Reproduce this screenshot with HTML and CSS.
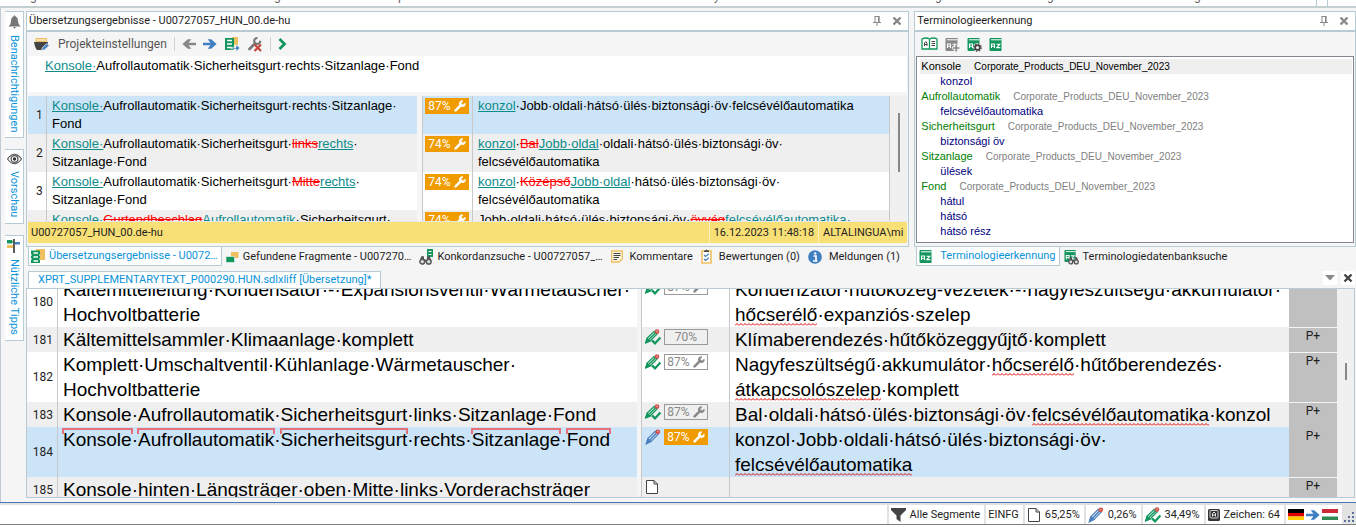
FILE: index.html
```html
<!DOCTYPE html>
<html lang="de">
<head>
  <meta charset="UTF-8">
  <meta name="viewport" content="width=device-width, initial-scale=1.0">
  <title>Editor</title>
  <link rel="stylesheet" href="styles.css">
</head>
<body>
  <!-- Icons -->
  <svg class="sprite" aria-hidden="true">
    <symbol id="wrench" viewBox="0 0 12 12">
      <path d="M1.6 10.4 L6.6 5.4" stroke="currentColor" stroke-width="2.6" stroke-linecap="round"/>
      <path d="M8.8 1.2 A2.4 2.4 0 1 0 10.8 3.4" stroke="currentColor" stroke-width="2" fill="none"/>
      <path d="M5.8 4.4 L7.2 3 L9 4.8 L7.6 6.2Z" fill="currentColor"/>
    </symbol>
    <symbol id="close" viewBox="0 0 10 10">
      <path d="M1.5 1.5 L8.5 8.5 M8.5 1.5 L1.5 8.5" stroke="currentColor" stroke-width="2.4"/>
    </symbol>
    <symbol id="pin" viewBox="0 0 10 10">
      <path d="M2.5 .5 H7.5 M3 .5 V6 M6.5 .5 V6 M7.2 .5 V6 M1 6.5 H9 M5 6.5 V10" stroke="currentColor" fill="none"/>
    </symbol>
    <symbol id="pencil" viewBox="0 0 16 16">
      <path d="M1.5 14.5 L3 9.6 L10.2 2.4 L13 5.2 L6 12.6 Z" fill="#dce9f6" stroke="#4a80bd" stroke-width="1.2"/>
      <path d="M4.4 11.4 L11.4 4 M1.5 14.5 L3 10 L5.6 12.4Z" stroke="#4a80bd" stroke-width="1.4" fill="#4a80bd"/>
      <circle cx="12.8" cy="2.8" r="2.4" fill="#d0504b"/>
      <circle cx="12.8" cy="2.6" r=".8" fill="#f0a8a4"/>
    </symbol>
    <symbol id="pencil-ok" viewBox="0 0 16 16">
      <path d="M.8 13.8 L2.2 9 L9.2 2.4 L12 5 L5 12 Z" fill="#d6efe2" stroke="#12965d" stroke-width="1.3"/>
      <path d="M3.4 10.8 L10.4 4 M.8 13.8 L2.2 9.6 L5 12Z" stroke="#12965d" stroke-width="1.2" fill="#12965d"/>
      <path d="M7 11.4 L10 14.4 L15.4 8.4" stroke="#12965d" stroke-width="2.2" fill="none"/>
      <circle cx="12" cy="2.6" r="2.3" fill="#d0504b"/>
      <circle cx="12" cy="2.4" r=".8" fill="#f0a8a4"/>
    </symbol>
    <symbol id="page" viewBox="0 0 14 16">
      <path d="M1.5 1.5 H9 L12.5 5 V14.5 H1.5Z M9 1.5 V5 H12.5" fill="#fff" stroke="#444"/>
    </symbol>
    <symbol id="arrow" viewBox="0 0 14 12">
      <path d="M0 4.7 H7.5 L4.6 1.2 H8.2 L13.6 6 L8.2 10.8 H4.6 L7.5 7.3 H0Z" fill="currentColor"/>
    </symbol>
    <symbol id="results" viewBox="0 0 14 14">
      <path d="M5 0 H14 V11 H5Z" fill="#f0c060"/>
      <path d="M0 1.500 H9 V14 H0Z" fill="#12965d"/>
      <path d="M2.500 4 H7 M2.500 8 H7 M2.500 12 H7" stroke="#fff" stroke-width="1.400"/>
      <path d="M0 6 H1 M0 10 H1 M8 6 H9 M8 10 H9" stroke="#fff"/>
    </symbol>
    <symbol id="glasses" viewBox="0 0 12 9">
      <path d="M2 1 H4.6 V4 H7.4 V1 H10 L11.5 6 H.5Z" fill="#555"/>
      <circle cx="3" cy="6" r="2.2" fill="#ddd" stroke="#555" stroke-width="1.3"/>
      <circle cx="9" cy="6" r="2.2" fill="#ddd" stroke="#555" stroke-width="1.3"/>
    </symbol>
    <symbol id="termbook" viewBox="0 0 14 15">
      <path d="M1.5 1 H12.5 V14 H1.5 Q.5 14 .5 13 V2 Q.5 1 1.5 1Z" fill="currentColor"/>
      <path d="M2 2.8 H12.5" stroke="#fff" stroke-width="1"/>
      <path d="M2.500 11 V7 H5.500 V11 M2.500 9.200 H5.500 M7.500 7.200 H10.800 L7.800 10.600 H11.300" stroke="#fff" stroke-width="1.100" fill="none"/>
    </symbol>
  </svg>

  <header class="ribbon">
    <span>g</span><span>g</span><span>p</span><span>y</span><span>g</span><span>g</span><span>g</span>
    <i class="ribbon-split"></i>
  </header>

  <div class="workspace">
    <nav class="rail">
      <button class="rail-tab">
        <svg width="13" height="14" viewBox="0 0 13 14"><path d="M6.5 0 L7.6 1.4 Q10 2.4 10 6 Q10 9.5 12.5 11.5 H.5 Q3 9.5 3 6 Q3 2.4 5.4 1.4Z M5 12 H8 L6.5 13.8Z" fill="#777"/></svg>
        Benachrichtigungen
      </button>
      <button class="rail-tab">
        <svg width="15" height="12" viewBox="0 0 15 12"><path d="M.5 6 Q7.5 -3.5 14.5 6 Q7.5 15.5 .5 6Z" fill="#fff" stroke="#555" stroke-width="1.2"/><circle cx="7.5" cy="6" r="3.4" fill="none" stroke="#555" stroke-width="1.3"/><circle cx="7.5" cy="6" r="1.7" fill="#333"/></svg>
        Vorschau
      </button>
      <button class="rail-tab">
        <svg width="14" height="14" viewBox="0 0 14 14"><path d="M0 1 H5 L6 3 L5 4.5 H0Z" fill="#12965d"/><path d="M8 3 H13 V5.5 H8Z" fill="#4a80bd"/><path d="M0 6 H6 V9 H0Z" fill="#f0c060"/><path d="M7 0 V14" stroke="#333" stroke-width="1.6"/></svg>
        Nützliche Tipps
      </button>
    </nav>

    <main class="main">
      <div class="docks">
        <!-- Übersetzungsergebnisse -->
        <section class="dock dock-results">
          <div class="dock-title">
            <h2>Übersetzungsergebnisse - U00727057_HUN_00.de-hu</h2>
            <button class="icon-button" aria-label="Anheften"><svg width="10" height="10"><use href="#pin"/></svg></button>
            <button class="icon-button" aria-label="Schließen"><svg width="10" height="10"><use href="#close"/></svg></button>
          </div>
          <div class="dock-body">
            <div class="toolbar">
              <button class="tool tool-text">
                <svg width="16" height="14" viewBox="0 0 16 14"><path d="M1.500 1 H13 V5 H1.500Z" fill="#f0c060"/><path d="M2.500 3 H12" stroke="#fff"/><path d="M0 5 H14 V8 L9 13 H3Q1 11 0 5Z" fill="#444"/><path d="M7.500 13.500 L8.500 10.500 L13 6.500 L15.300 8.500 L10.500 12.900Z" fill="#4a80bd" stroke="#fff" stroke-width=".7"/></svg>
                Projekteinstellungen
              </button>
              <i class="tool-split"></i>
              <button class="tool tool-back" aria-label="Zurück"><svg width="14" height="12" viewBox="0 0 14 12"><path d="M14 4.700 H6.500 L9.400 1.200 H5.800 L.4 6 L5.800 10.800 H9.400 L6.500 7.300 H14Z" fill="currentColor"/></svg></button>
              <button class="tool tool-next" aria-label="Weiter"><svg width="14" height="12"><use href="#arrow"/></svg></button>
              <button class="tool" aria-label="Übersetzung anwenden"><svg width="16" height="16" viewBox="0 0 16 16"><path d="M8 1 H14 V9 H8Z" fill="#f0c060"/><path d="M1 2 H10 V14 H1Z" fill="#12965d"/><path d="M3 4.500 H8 M3 8 H8 M3 11.500 H8" stroke="#fff" stroke-width="1.400"/><path d="M7 11.500 H12 V8.500 L16 12 L12 15.500 V13 H7Z" fill="#4a80bd" stroke="#fff" stroke-width=".6"/></svg></button>
              <button class="tool" aria-label="Einstellungen löschen"><svg width="16" height="16" viewBox="0 0 16 16"><path d="M2.500 13 L8 7.500" stroke="#777" stroke-width="2.600" stroke-linecap="round"/><path d="M10.500 2 A3 3 0 1 0 13.200 4.800" fill="none" stroke="#777" stroke-width="2.200"/><path d="M7.500 8.500 L14 15 M14 8.500 L7.500 15" stroke="#c8443e" stroke-width="2.200"/></svg></button>
              <i class="tool-split"></i>
              <button class="tool" aria-label="Mehr"><svg width="9" height="12" viewBox="0 0 9 12"><path d="M1.500 1 L6.500 6 L1.500 11" fill="none" stroke="#12965d" stroke-width="2.800"/></svg></button>
            </div>
            <p class="query"><ins>Konsole·</ins>Aufrollautomatik·Sicherheitsgurt·rechts·Sitzanlage·Fond</p>
            <div class="result-area">
              <div class="result-view">
                <table class="results">
                  <tbody>
                    <tr class="active">
                      <th>1</th>
                      <td class="seg"><ins>Konsole·</ins>Aufrollautomatik·Sicherheitsgurt·rechts·Sitzanlage·<br>Fond</td>
                      <td class="gap"></td>
                      <td class="rate"><span class="match">87%<svg width="12" height="12"><use href="#wrench"/></svg></span></td>
                      <td class="seg"><ins>konzol</ins>·Jobb·oldali·hátsó·ülés·biztonsági·öv·felcsévélőautomatika</td>
                    </tr>
                    <tr>
                      <th>2</th>
                      <td class="seg"><ins>Konsole·</ins>Aufrollautomatik·Sicherheitsgurt·<del>links</del><ins>rechts</ins>·<br>Sitzanlage·Fond</td>
                      <td class="gap"></td>
                      <td class="rate"><span class="match">74%<svg width="12" height="12"><use href="#wrench"/></svg></span></td>
                      <td class="seg"><ins>konzol</ins>·<del>Bal</del><ins>Jobb·oldal</ins>·oldali·hátsó·ülés·biztonsági·öv·<br>felcsévélőautomatika</td>
                    </tr>
                    <tr>
                      <th>3</th>
                      <td class="seg"><ins>Konsole·</ins>Aufrollautomatik·Sicherheitsgurt·<del>Mitte</del><ins>rechts</ins>·<br>Sitzanlage·Fond</td>
                      <td class="gap"></td>
                      <td class="rate"><span class="match">74%<svg width="12" height="12"><use href="#wrench"/></svg></span></td>
                      <td class="seg"><ins>konzol</ins>·<del>Középső</del><ins>Jobb·oldal</ins>·hátsó·ülés·biztonsági·öv·<br>felcsévélőautomatika</td>
                    </tr>
                    <tr>
                      <th></th>
                      <td class="seg"><ins>Konsole·</ins><del>Gurtendbeschlag</del><ins>Aufrollautomatik</ins>·Sicherheitsgurt·</td>
                      <td class="gap"></td>
                      <td class="rate"><span class="match">74%<svg width="12" height="12"><use href="#wrench"/></svg></span></td>
                      <td class="seg">Jobb·oldali·hátsó·ülés·biztonsági·öv·<del>övvég</del><ins>felcsévélőautomatika·</ins></td>
                    </tr>
                  </tbody>
                </table>
              </div>
              <div class="scroll"><i class="thumb"></i></div>
            </div>
            <div class="memory">
              <span class="memory-name">U00727057_HUN_00.de-hu</span>
              <span>16.12.2023 11:48:18</span>
              <span class="memory-user">ALTALINGUA\mi</span>
            </div>
          </div>
          <div class="tabs">
            <button class="tab active"><svg width="14" height="14"><use href="#results"/></svg>Übersetzungsergebnisse - U0072…</button>
            <button class="tab"><svg width="13" height="12" viewBox="0 0 13 12"><path d="M5 1 H12.500 V7 H5Z" fill="#f0c060"/><path d="M0 5.500 H8.500 V11.500 H0Z" fill="#12965d" stroke="#f5f5f5" stroke-width=".6"/></svg>Gefundene Fragmente - U007270…</button>
            <button class="tab"><svg width="14" height="16" viewBox="0 0 14 16"><path d="M8 0 H14 V8 H8Z" fill="#12965d"/><path d="M9.500 2.500 H12.500 M9.500 5.500 H12.500" stroke="#fff"/><use href="#glasses" y="6" width="13" height="10"/></svg>Konkordanzsuche - U00727057_…</button>
            <button class="tab tab-wide"><svg width="12" height="13" viewBox="0 0 12 13"><path d="M.7 1 H11.300 V9 L8 12 H.7Z" fill="#fff7e0" stroke="#f0c060" stroke-width="1.300"/><path d="M2.500 3.500 H9.500 M2.500 5.500 H9.500 M2.500 7.500 H8 M2.500 9.500 H6" stroke="#444"/></svg>Kommentare</button>
            <button class="tab tab-wide"><svg width="11" height="15" viewBox="0 0 11 15"><path d="M1 2 H10 V14 H1Z" fill="#fff" stroke="#f0c060" stroke-width="1.600"/><path d="M3 3 V1.500 H4.500 L5.500 .3 L6.500 1.500 H8 V3Z" fill="#444"/><path d="M3 6 L4.500 7.500 L8 4.800 M3 10 L4.500 11.500 L8 8.800" stroke="#4a80bd" stroke-width="1.300" fill="none"/></svg>Bewertungen (0)</button>
            <button class="tab tab-wide"><svg width="14" height="14" viewBox="0 0 14 14"><circle cx="7" cy="7" r="6.800" fill="#3f7fc1"/><path d="M5.500 6 H8 V10.800 M5 11 H9.500" stroke="#fff" stroke-width="1.700" fill="none"/><circle cx="7.200" cy="3.400" r="1.200" fill="#fff"/></svg>Meldungen (1)</button>
          </div>
        </section>

        <!-- Terminologieerkennung -->
        <section class="dock dock-terms">
          <div class="dock-title">
            <h2>Terminologieerkennung</h2>
            <button class="icon-button" aria-label="Anheften"><svg width="10" height="10"><use href="#pin"/></svg></button>
            <button class="icon-button" aria-label="Schließen"><svg width="10" height="10"><use href="#close"/></svg></button>
          </div>
          <div class="dock-body">
            <div class="toolbar toolbar-terms">
              <button class="tool" aria-label="Termdetails"><svg width="17" height="14" viewBox="0 0 17 14"><path d="M1 2 Q5 0 8.500 2 Q12 0 16 2 V12 H1Z M8.500 2 V12" fill="#fff" stroke="#12965d" stroke-width="1.300"/><path d="M3.500 9 V6 L4.800 4.500 L6 6 V9 M3.500 7.500 H6 M10.500 4.500 H14 M10.500 6.500 H14 M10.500 8.500 H14" stroke="#444" fill="none"/></svg></button>
              <button class="tool tool-off" aria-label="Neuer Term"><svg width="15" height="15" viewBox="0 0 15 15"><use href="#termbook" width="14" height="15"/><path d="M7.500 11 H14.500 M11 7.500 V14.500" stroke="#f5f5f5" stroke-width="3.500"/><path d="M8 11 H14.500 M11.200 7.800 V14.500" stroke="#888" stroke-width="1.600"/></svg></button>
              <button class="tool" aria-label="Termeinstellungen"><svg width="15" height="15" viewBox="0 0 15 15"><use href="#termbook" width="14" height="15"/><circle cx="10.500" cy="10.500" r="4.400" fill="#f5f5f5"/><circle cx="10.500" cy="10.500" r="2.400" fill="none" stroke="#444" stroke-width="1.800"/><circle cx="10.500" cy="10.500" r="3.700" fill="none" stroke="#444" stroke-width="1.300" stroke-dasharray="1.500 1.400"/></svg></button>
              <button class="tool" aria-label="Termdatenbank"><svg width="14" height="15"><use href="#termbook"/></svg></button>
            </div>
            <dl class="terms">
              <div class="term active"><dt>Konsole</dt><dd>Corporate_Products_DEU_November_2023</dd></div>
              <dd class="translation">konzol</dd>
              <div class="term"><dt>Aufrollautomatik</dt><dd>Corporate_Products_DEU_November_2023</dd></div>
              <dd class="translation">felcsévélőautomatika</dd>
              <div class="term"><dt>Sicherheitsgurt</dt><dd>Corporate_Products_DEU_November_2023</dd></div>
              <dd class="translation">biztonsági öv</dd>
              <div class="term"><dt>Sitzanlage</dt><dd>Corporate_Products_DEU_November_2023</dd></div>
              <dd class="translation">ülések</dd>
              <div class="term"><dt>Fond</dt><dd>Corporate_Products_DEU_November_2023</dd></div>
              <dd class="translation">hátul</dd>
              <dd class="translation">hátsó</dd>
              <dd class="translation">hátsó rész</dd>
            </dl>
          </div>
          <div class="tabs">
            <button class="tab tab-wide active"><svg width="14" height="15"><use href="#termbook"/></svg>Terminologieerkennung</button>
            <button class="tab"><svg width="15" height="16" viewBox="0 0 15 16"><use href="#termbook" width="13" height="14"/><use href="#glasses" x="4" y="7" width="11" height="9"/></svg>Terminologiedatenbanksuche</button>
          </div>
        </section>
      </div>

      <!-- Editor -->
      <section class="editor">
        <div class="editor-bar">
          <button class="file-tab">XPRT_SUPPLEMENTARYTEXT_P000290.HUN.sdlxliff [Übersetzung]*</button>
          <button class="square-button" aria-label="Dokumente"><svg width="10" height="6" viewBox="0 0 10 6"><path d="M0 0 H10 L5 5.500Z" fill="#888"/></svg></button>
          <button class="square-button" aria-label="Schließen"><svg width="10" height="10"><use href="#close"/></svg></button>
        </div>
        <div class="editor-view">
          <table class="segments">
            <tbody>
              <tr>
                <th>180</th>
                <td class="seg">Kältemittelleitung·Kondensator·-·Expansionsventil·Wärmetauscher·<br>Hochvoltbatterie</td>
                <td class="gap"></td>
                <td class="rate"><svg width="16" height="16"><use href="#pencil-ok"/></svg><span class="match plain">87%<svg width="12" height="12"><use href="#wrench"/></svg></span></td>
                <td class="seg">Kondenzátor·hűtőközeg-vezeték·-·nagyfeszültségű·akkumulátor·<br><u>hőcserélő</u>·expanziós·szelep</td>
                <td class="kind"></td>
              </tr>
              <tr class="odd">
                <th>181</th>
                <td class="seg">Kältemittelsammler·Klimaanlage·komplett</td>
                <td class="gap"></td>
                <td class="rate"><svg width="16" height="16"><use href="#pencil-ok"/></svg><span class="match plain">70%</span></td>
                <td class="seg">Klímaberendezés·hűtőközeggyűjtő·komplett</td>
                <td class="kind">P+</td>
              </tr>
              <tr>
                <th>182</th>
                <td class="seg">Komplett·Umschaltventil·Kühlanlage·Wärmetauscher·<br>Hochvoltbatterie</td>
                <td class="gap"></td>
                <td class="rate"><svg width="16" height="16"><use href="#pencil-ok"/></svg><span class="match plain">87%<svg width="12" height="12"><use href="#wrench"/></svg></span></td>
                <td class="seg">Nagyfeszültségű·akkumulátor·<u>hőcserélő</u>·hűtőberendezés·<br><u>átkapcsolószelep</u>·komplett</td>
                <td class="kind">P+</td>
              </tr>
              <tr class="odd">
                <th>183</th>
                <td class="seg">Konsole·Aufrollautomatik·Sicherheitsgurt·links·Sitzanlage·Fond</td>
                <td class="gap"></td>
                <td class="rate"><svg width="16" height="16"><use href="#pencil-ok"/></svg><span class="match plain">87%<svg width="12" height="12"><use href="#wrench"/></svg></span></td>
                <td class="seg">Bal·oldali·hátsó·ülés·biztonsági·öv·<u>felcsévélőautomatika</u>·konzol</td>
                <td class="kind">P+</td>
              </tr>
              <tr class="active">
                <th>184</th>
                <td class="seg"><mark>Konsole</mark>·<mark>Aufrollautomatik</mark>·<mark>Sicherheitsgurt</mark>·rechts·<mark>Sitzanlage</mark>·<mark>Fond</mark></td>
                <td class="gap"></td>
                <td class="rate"><svg width="16" height="16"><use href="#pencil"/></svg><span class="match">87%<svg width="12" height="12"><use href="#wrench"/></svg></span></td>
                <td class="seg">konzol·Jobb·oldali·hátsó·ülés·biztonsági·öv·<br><u>felcsévélőautomatika</u></td>
                <td class="kind">P+</td>
              </tr>
              <tr class="odd">
                <th>185</th>
                <td class="seg">Konsole·hinten·Längsträger·oben·Mitte·links·Vorderachsträger</td>
                <td class="gap"></td>
                <td class="rate"><svg width="14" height="16"><use href="#page"/></svg></td>
                <td class="seg"></td>
                <td class="kind">P+</td>
              </tr>
            </tbody>
          </table>
          <div class="scroll"><i class="thumb"></i></div>
        </div>
      </section>
    </main>
  </div>

  <footer class="status">
    <span class="status-fill"></span>
    <span class="status-item"><svg width="15" height="14" viewBox="0 0 15 14"><path d="M0 0 H15 V2 L9.500 7.500 V14 L5.500 11 V7.500 L0 2Z" fill="#444"/></svg>Alle Segmente</span>
    <span class="status-item">EINFG</span>
    <span class="status-item"><svg width="14" height="16"><use href="#page"/></svg>65,25%</span>
    <span class="status-item"><svg width="16" height="16"><use href="#pencil"/></svg>0,26%</span>
    <span class="status-item"><svg width="16" height="16"><use href="#pencil-ok"/></svg>34,49%</span>
    <span class="status-item"><svg width="12" height="12" viewBox="0 0 12 12"><rect width="12" height="12" rx="1.500" fill="#333"/><rect x="2" y="1.500" width="8" height="7.500" rx="1" fill="none" stroke="#fff" stroke-width=".8"/><path d="M4.500 7.500 V4.500 L6 3 L7.500 4.500 V7.500 M4.500 6 H7.500" stroke="#fff" stroke-width=".9" fill="none"/></svg>Zeichen: 64</span>
    <span class="status-item status-lang">
      <svg width="16" height="11" viewBox="0 0 16 11"><path d="M0 0 H16 V4 H0Z" fill="#000"/><path d="M0 4 H16 V7.500 H0Z" fill="#d00"/><path d="M0 7.500 H16 V11 H0Z" fill="#fc0"/></svg>
      <svg class="lang-arrow" width="14" height="12"><use href="#arrow"/></svg>
      <svg width="16" height="11" viewBox="0 0 16 11"><path d="M0 0 H16 V4 H0Z" fill="#ce2939"/><path d="M0 4 H16 V7.500 H0Z" fill="#fff"/><path d="M0 7.500 H16 V11 H0Z" fill="#2f8a55"/></svg>
    </span>
    <svg class="grip" width="12" height="12" viewBox="0 0 12 12"><path d="M8 1 H10 V3 H8Z M4 5 H6 V7 H4Z M8 5 H10 V7 H8Z M0 9 H2 V11 H0Z M4 9 H6 V11 H4Z M8 9 H10 V11 H8Z" fill="#5b6f9b"/></svg>
  </footer>
</body>
</html>
```

FILE: styles.css
```css
* {
  box-sizing: border-box;
}

body {
  display: flex;
  flex-direction: column;
  height: 100vh;
  margin: 0;
  overflow: hidden;
  background: #f5f5f5;
  color: #1e1e1e;
  font-family: Roboto, "Liberation Sans", sans-serif;
  font-size: 11px;
  line-height: 16px;
}

button {
  display: flex;
  align-items: center;
  margin: 0;
  padding: 0;
  border: none;
  background: none;
  color: inherit;
  font: inherit;
  white-space: nowrap;
  cursor: pointer;
}

svg {
  flex: none;
}

.sprite {
  position: absolute;
  width: 0;
  height: 0;
}

/* Unterkante des Menübands */
.ribbon {
  display: grid;
  grid-template-columns: 30px 244px 124px 316px 221px 112px 147px 1fr;
  flex: none;
  align-items: start;
  height: 8px;
  overflow: hidden;
  border-bottom: 2px solid #c3cfd1;
  background: #fff;
  color: #666;
  font-size: 12px;
}

.ribbon span {
  grid-row: 1;
  margin-top: -12px;
}

.ribbon span:nth-child(1) { grid-column: 2; }
.ribbon span:nth-child(2) { grid-column: 3; }
.ribbon span:nth-child(3) { grid-column: 4; }
.ribbon span:nth-child(4) { grid-column: 5; }
.ribbon span:nth-child(5) { grid-column: 6; }
.ribbon span:nth-child(6) { grid-column: 7; }
.ribbon span:nth-child(7) { grid-column: 8; }

.ribbon-split {
  grid-row: 1;
  grid-column: 8;
  justify-self: end;
  width: 12px;
  height: 6px;
  margin-right: 28px;
  border: solid #b9cbd2;
  border-width: 0 1px;
}

.workspace {
  display: flex;
  flex: 1;
  min-height: 0;
}

/* Linke Leiste */
.rail {
  display: flex;
  flex: none;
  flex-direction: column;
  gap: 11px;
  width: 26px;
  padding: 3px 2px 0 4px;
  border-left: 1px solid #c2cbd3;
}

.rail-tab {
  flex: none;
  gap: 6px;
  width: 19px;
  padding: 3px 0 5px;
  border: solid #b9cbd2;
  border-width: 1px 1px 1px 0;
  background: #fff;
  color: #0a93d9;
  writing-mode: vertical-rl;
}

.main {
  display: flex;
  flex: 1;
  flex-direction: column;
  min-width: 0;
  padding-top: 3px;
}

.docks {
  display: grid;
  grid-template-columns: minmax(0, 2fr) minmax(0, 1fr);
  flex: none;
  gap: 5px;
}

.dock-title {
  display: flex;
  align-items: center;
  gap: 10px;
  height: 21px;
  padding: 0 6px 0 2px;
  border: 1px solid #b9cbd2;
  border-bottom-width: 2px;
  background: #fff;
}

.dock-title h2 {
  flex: 1;
  margin: 0;
  font-size: 11px;
  font-weight: normal;
}

.icon-button {
  color: #888;
}

.dock-body {
  display: flex;
  flex-direction: column;
  height: 215px;
  padding: 0 1px 3px;
  border: solid #b9cbd2;
  border-width: 0 1px 1px;
}

.toolbar {
  display: flex;
  flex: none;
  align-items: center;
  gap: 7px;
  height: 24px;
  padding-left: 6px;
}

.toolbar-terms {
  padding-left: 5px;
}

.tool {
  color: #12965d;
}

.tool-text {
  gap: 8px;
  color: #555;
  font-size: 12px;
}

.tool-back,
.tool-off {
  color: #888;
}

.tool-next,
.lang-arrow {
  color: #3f7fc1;
}

.tool-split {
  width: 1px;
  height: 14px;
  background: #d0d0d0;
}

.query {
  flex: none;
  height: 36px;
  margin: 0 0 4px;
  padding: 1px 17px;
  background: #fff;
  color: #000;
  font: 13px/18px "Liberation Sans", sans-serif;
}

ins {
  color: #0c8b8b;
}

del {
  color: #f00;
}

.result-area {
  display: flex;
  flex: 1;
  min-height: 0;
  overflow: hidden;
}

.result-view {
  flex: 1;
  min-width: 0;
  border-right: 1px solid #c8c8c8;
}

table,
tbody {
  display: block;
}

tr {
  display: grid;
}

th,
td {
  padding: 0;
  font-weight: normal;
  text-align: left;
}

th {
  font-size: 12px;
}

.seg {
  overflow: hidden;
  color: #000;
  font-family: "Liberation Sans", sans-serif;
  white-space: nowrap;
}

.results tr {
  grid-template-columns: 18px 8fr 5px 50px 9fr;
  height: 38px;
  background: #fff;
}

.results tr:nth-child(even) {
  background: #efefef;
}

.results th {
  align-self: center;
  padding-left: 8px;
}

.results .seg {
  padding: 1px 0 0 5px;
  border-left: 1px solid #c8c8c8;
  font-size: 13px;
  line-height: 18px;
}

.results .rate {
  padding: 2px 0 0 2px;
  border-left: 1px solid #c8c8c8;
}

.results .active,
.segments .active {
  background: #cce4f7;
}

.gap {
  background: #f5f5f5;
}

.match {
  display: flex;
  align-items: center;
  justify-content: center;
  gap: 3px;
  width: 44px;
  height: 16px;
  background: #f09b00;
  color: #fff;
  font-size: 12px;
}

.plain {
  border: 1px solid #999;
  background: none;
  color: #888;
}

.scroll {
  display: flex;
  flex: none;
  justify-content: center;
  width: 17px;
  background: #f0f0f0;
}

.thumb {
  width: 2px;
  background: #888;
}

.result-area .thumb {
  height: 59px;
  margin-top: 17px;
}

.memory {
  display: flex;
  flex: none;
  height: 22px;
  border-top: 1px solid #e8e8e8;
  background: #f9e076;
  line-height: 21px;
}

.memory span {
  padding: 0 4px;
  border-left: 1px solid #fdf2c0;
}

.memory .memory-name {
  flex: 1;
  padding-left: 3px;
  border: none;
}

/* Reiter unter den Fenstern */
.tabs {
  display: flex;
  height: 20px;
  padding-left: 2px;
}

.tab {
  gap: 4px;
  height: 19px;
  padding: 0 4px;
}

.tab-wide {
  gap: 7px;
}

.tab.active {
  padding: 0 3px 0 2px;
  border: solid #b9cbd2;
  border-width: 0 1px 1px;
  background: #fff;
  color: #0a93d9;
}

.tab svg {
  color: #12965d;
}

.terms {
  flex: 1;
  margin: 0;
  padding: 2px 1px 0 3px;
  border: 1px solid #828790;
  background: #fff;
  font: 11px/15px "Liberation Sans", sans-serif;
}

.terms dd {
  margin: 0;
}

.term {
  display: flex;
  gap: 13px;
  padding-left: 1px;
  color: #808080;
}

.term dt {
  color: #008000;
}

.term dd {
  font-size: 10px;
}

.term.active,
.term.active dt {
  background: #efefef;
  color: #000;
}

.terms .translation {
  padding-left: 20px;
  color: #000080;
}

/* Editor */
.editor {
  display: flex;
  flex: 1;
  flex-direction: column;
  min-height: 0;
  margin: 4px 1px 4px 0;
}

.editor-bar {
  display: flex;
  flex: none;
  gap: 4px;
  height: 18px;
  padding-left: 2px;
  border-bottom: 1px solid #b9cbd2;
}

.file-tab {
  margin-right: auto;
  padding: 0 9px;
  border: solid #b9cbd2;
  border-width: 1px 1px 0;
  background: #fff;
  color: #0a93d9;
}

.square-button {
  justify-content: center;
  width: 14px;
  height: 14px;
  background: #fff;
  color: #444;
}

.editor-view {
  display: flex;
  flex: 1;
  min-height: 0;
  overflow: hidden;
  border: solid #b9cbd2;
  border-width: 0 1px 1px;
}

.segments {
  flex: 1;
  min-width: 0;
  margin-top: -12px;
}

.segments tr {
  grid-template-columns: 30px 29fr 4px 88px 28fr 48px;
  background: #fff;
}

.segments .odd {
  background: #efefef;
}

.segments th {
  align-self: center;
  padding-right: 4px;
  text-align: right;
}

.segments .seg {
  min-height: 25px;
  padding-left: 5px;
  border-left: 1px solid #c8c8c8;
  font-size: 19px;
  line-height: 25px;
}

.segments .rate {
  display: flex;
  align-items: flex-start;
  gap: 3px;
  padding: 2px 0 0 3px;
  border-left: 1px solid #c8c8c8;
}

.segments u {
  padding-bottom: 1px;
  background: url("data:image/svg+xml,%3Csvg xmlns='http://www.w3.org/2000/svg' width='4' height='3'%3E%3Cpath d='M0 2.5L2 .5L4 2.5' fill='none' stroke='%23e00000'/%3E%3C/svg%3E") repeat-x left bottom;
  text-decoration: none;
}

.segments mark {
  position: relative;
  background: none;
  color: inherit;
}

.segments mark::before {
  position: absolute;
  top: -1px;
  right: -1px;
  left: -1px;
  height: 4px;
  border: 2px solid #e5707a;
  border-bottom: none;
  content: "";
}

.kind {
  border-top: 1px solid #f5f5f5;
  background: #c0c0c0;
  font-size: 12px;
  text-align: center;
}

.active .kind {
  border-top-color: #c0c0c0;
}

.editor-view .thumb {
  height: 17px;
  margin-top: 74px;
}

/* Statusleiste */
.status {
  display: flex;
  flex: none;
  gap: 2px;
  height: 25px;
  padding-top: 2px;
  border-top: 1px solid #4a78b5;
  border-bottom: 2px solid #fff;
  background: #e2e2e2;
  box-shadow: inset 0 -1px #808080;
}

.status-fill {
  flex: 1;
  margin-bottom: 1px;
  background: #fff;
}

.status-item {
  display: flex;
  align-items: center;
  gap: 4px;
  margin-bottom: 1px;
  padding: 0 4px 0 2px;
  background: #fff;
}

.status-lang {
  gap: 2px;
}

.grip {
  align-self: flex-end;
  margin-bottom: 2px;
}
```
